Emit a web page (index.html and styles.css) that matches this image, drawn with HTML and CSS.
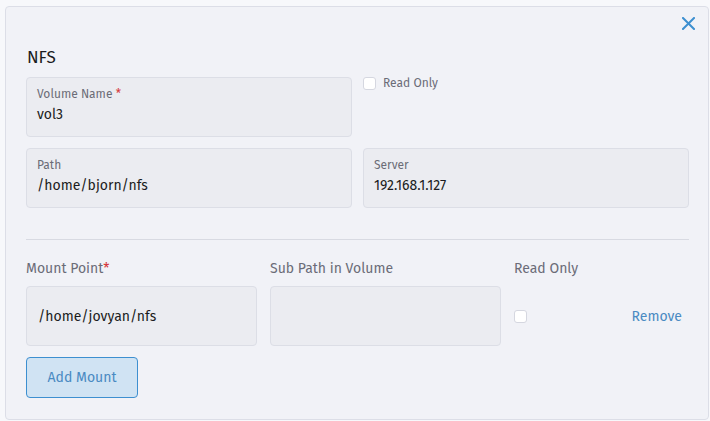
FILE: index.html
```html
<!DOCTYPE html>
<html>
<head>
<meta charset="utf-8">
<link rel="stylesheet" href="styles.css">
</head>
<body>
<div class="card">
  <div class="topbar">
    <button class="close" aria-label="Close">
      <svg width="13" height="13" viewBox="0 0 13 13"><path d="M1 1L12 12M12 1L1 12" stroke="#3d8fd0" stroke-width="2" stroke-linecap="square" fill="none"/></svg>
    </button>
  </div>
  <h2 class="title">NFS</h2>
  <div class="grid2">
    <div class="field">
      <div class="flabel">Volume Name <span class="req">*</span></div>
      <div class="fvalue">vol3</div>
    </div>
    <label class="check-top"><span class="box"></span><span>Read Only</span></label>
    <div class="field">
      <div class="flabel">Path</div>
      <div class="fvalue">/home/bjorn/nfs</div>
    </div>
    <div class="field">
      <div class="flabel">Server</div>
      <div class="fvalue">192.168.1.127</div>
    </div>
  </div>
  <hr class="divider">
  <div class="mounts">
    <div class="mlabel">Mount Point<span class="req">*</span></div>
    <div class="mlabel">Sub Path in Volume</div>
    <div class="mlabel">Read Only</div>
    <div></div>
    <div class="input">/home/jovyan/nfs</div>
    <div class="input"></div>
    <div class="mcheck"><span class="box"></span></div>
    <div class="remove">Remove</div>
  </div>
  <button class="add">Add Mount</button>
</div>
</body>
</html>
```
FILE: styles.css
```css
* { box-sizing: border-box; }
body {
  margin: 0;
  background: #f7f8fb;
  font-family: "Fira Sans", Lato, "Open Sans", sans-serif;
  color: #1b1c21;
}
.card {
  margin: 6px 1px 0 5px;
  height: 414px;
  background: #f1f2f7;
  border: 1px solid #dcdee7;
  border-radius: 4px;
  padding: 8px 19px 20px 20px;
}
.topbar {
  display: flex;
  justify-content: flex-end;
  height: 20px;
}
.close {
  border: 0;
  background: none;
  padding: 0;
  margin: 2px -6px 0 0;
  width: 13px;
  height: 13px;
  display: flex;
}
.title {
  margin: 12px 0 0 1px;
  font-size: 17px;
  font-weight: 400;
  line-height: 22px;
  color: #1b1c21;
}
.grid2 {
  margin-top: 8px;
  display: grid;
  grid-template-columns: 326px 326px;
  column-gap: 11px;
  row-gap: 11px;
}
.field {
  height: 60px;
  background: #ebecf1;
  border: 1px solid #dcdee6;
  border-radius: 4px;
  padding: 8px 10px;
}
.flabel {
  font-size: 12px;
  line-height: 16px;
  color: #6b6c77;
}
.req { color: #d6393e; }
.fvalue {
  margin-top: 4px;
  font-size: 14px;
  line-height: 18px;
  color: #1b1c21;
}
.check-top {
  display: flex;
  align-items: flex-start;
  gap: 7px;
  font-size: 12px;
  color: #6b6c77;
  line-height: 13px;
}
.box {
  display: inline-block;
  width: 13px;
  height: 13px;
  background: #fff;
  border: 1px solid #d5d7e0;
  border-radius: 3px;
  flex: none;
}
.divider {
  margin: 31px 0 0;
  border: 0;
  border-top: 1px solid #d8dae2;
  height: 0;
}
.mounts {
  margin-top: 19px;
  display: grid;
  grid-template-columns: 231px 231px 1fr 1fr;
  column-gap: 13px;
  row-gap: 7px;
  align-items: center;
}
.mlabel {
  font-size: 14px;
  line-height: 20px;
  color: #6b6c77;
}
.input {
  height: 60px;
  background: #ebecf1;
  border: 1px solid #dcdee6;
  border-radius: 4px;
  padding: 0 11px;
  display: flex;
  align-items: center;
  font-size: 14px;
  color: #1b1c21;
}
.mcheck { display: flex; }
.remove {
  text-align: right;
  padding-right: 7px;
  font-size: 14px;
  color: #4a8ac2;
}
.add {
  margin-top: 11px;
  width: 112px;
  height: 41px;
  background: #d0e3f3;
  border: 1px solid #3d8fd0;
  border-radius: 4px;
  font-family: inherit;
  font-size: 14px;
  color: #4a8ac2;
  padding: 0;
}
```
